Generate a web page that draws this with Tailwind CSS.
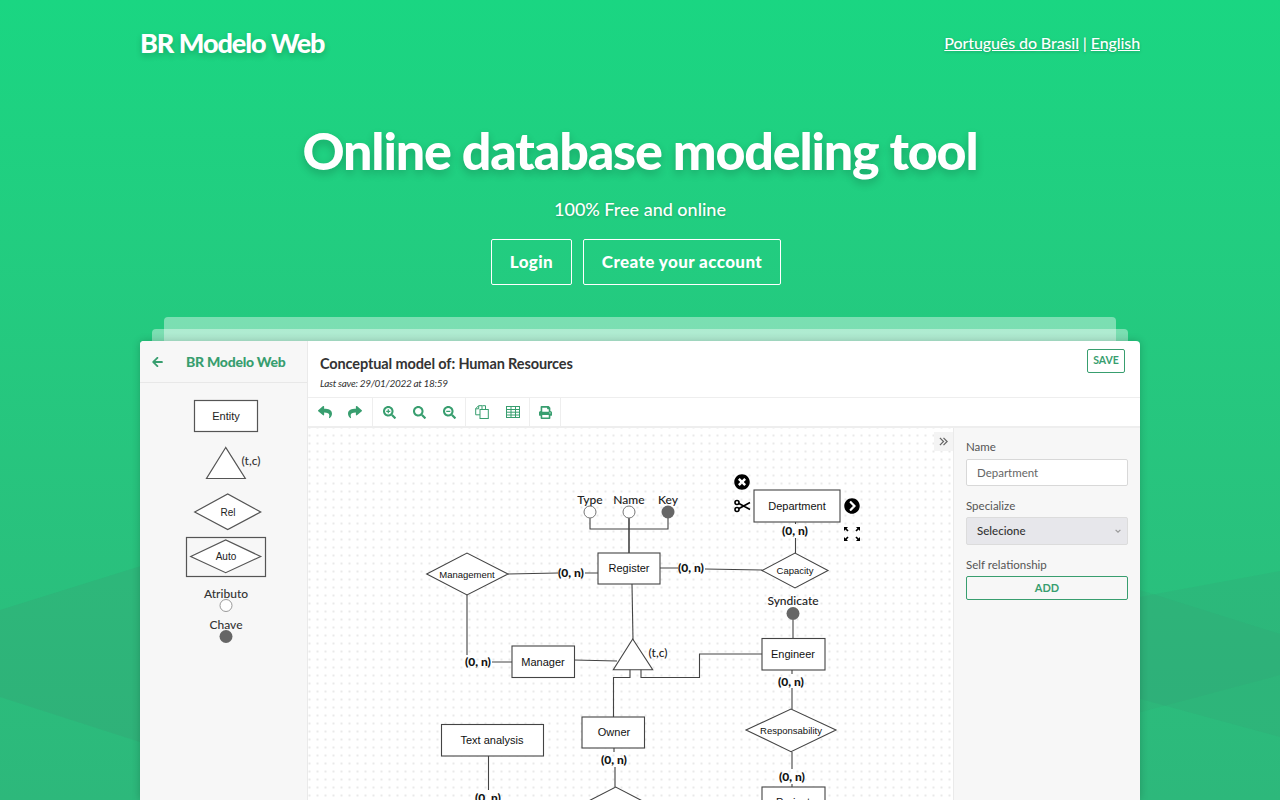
<!DOCTYPE html>
<html lang="en">

<head>
    <meta charset="UTF-8">
    <meta name="viewport" content="width=device-width, initial-scale=1.0">
    <title>BR Modelo Web</title>
    <script src="https://cdn.jsdelivr.net/npm/@tailwindcss/browser@4"></script>
</head>

<body class="font-['Lato',sans-serif] text-white">
    <div class="relative h-[800px] overflow-hidden bg-gradient-to-b from-[#1ad682] to-[#2db87b]">
        <!-- Background wedges -->
        <svg class="absolute inset-0" width="1280" height="800" viewBox="0 0 1280 800">
            <polygon points="0,610 320,510 700,560 320,800 0,697" fill="#47806a" fill-opacity="0.14" />
            <polygon points="1280,571 960,630 960,650 1280,737" fill="#47806a" fill-opacity="0.1" />
            <polygon points="1280,634 1140,590 960,560 960,760 1280,675" fill="#47806a" fill-opacity="0.09" />
        </svg>

        <div class="relative mx-auto w-[1000px]">
            <!-- Nav -->
            <nav class="flex h-[87px] items-center justify-between">
                <a href="#" class="text-[27px] font-black tracking-[-1.05px] [text-shadow:0_3px_6px_rgba(0,0,0,0.2)]">BR Modelo Web</a>
                <div class="pb-[2px] text-[16px] font-medium tracking-[-0.1px] [text-shadow:0_1px_3px_rgba(0,0,0,0.25)]">
                    <a href="#" class="underline">Português do Brasil</a> | <a href="#" class="underline">English</a>
                </div>
            </nav>

            <!-- Hero -->
            <header class="text-center">
                <h1 class="mt-[28px] text-[52px] leading-[70px] font-black tracking-[-1.2px] [text-shadow:0_4px_8px_rgba(0,0,0,0.2)]">Online database modeling tool</h1>
                <p class="mt-[10px] text-[18px] leading-[28px] font-medium [text-shadow:0_1px_3px_rgba(0,0,0,0.2)]">100% Free and online</p>
                <div class="mt-[16px] flex justify-center gap-[11px] pr-[8px]">
                    <a href="#" class="flex h-[46px] w-[81px] items-center justify-center rounded-[2px] border border-white text-[17px] font-black tracking-[0.4px]">Login</a>
                    <a href="#" class="flex h-[46px] w-[198px] items-center justify-center rounded-[2px] border border-white text-[17px] font-black tracking-[0.4px]">Create your account</a>
                </div>
            </header>

            <!-- Stacked sheets behind the app -->
            <div class="mx-6 mt-8 h-6 rounded-t-[4px] bg-white/40"></div>
            <div class="mx-3 -mt-3 h-3 rounded-t-[4px] bg-white/40"></div>

            <!-- App window -->
            <main class="flex h-[459px] overflow-hidden rounded-t-[4px] bg-white text-[#333] shadow-[0_0_8px_rgba(0,0,0,0.2)]">
                <!-- Palette -->
                <aside class="w-[168px] shrink-0 border-r border-[#eaeaea] bg-[#f7f7f7]">
                    <div class="flex h-[42px] items-center border-b border-[#e8e8e8] pl-[12px]">
                        <svg class="h-[12px] w-[11px] fill-[#389e6f]" viewBox="0 0 448 512"><path d="M257.5 445.1l-22.2 22.2c-9.4 9.4-24.6 9.4-33.9 0L7 273c-9.4-9.4-9.4-24.6 0-33.9L201.4 44.7c9.4-9.4 24.6-9.4 33.9 0l22.2 22.2c9.5 9.5 9.3 25-.4 34.3L136.6 216H424c13.3 0 24 10.7 24 24v32c0 13.3-10.7 24-24 24H136.6l120.5 114.8c9.8 9.3 10 24.8.4 34.3z" /></svg>
                        <span class="ml-[23px] text-[14px] font-black tracking-[-0.25px] text-[#389e6f]">BR Modelo Web</span>
                    </div>
                    <svg width="167" height="417" viewBox="140 383 167 417" class="font-['Liberation_Sans',sans-serif]">
                        <g fill="none" stroke="#555" stroke-width="1.2">
                            <rect x="194.5" y="400.5" width="63" height="31" fill="#fff" />
                            <polygon points="225.7,447.5 206.5,478.5 245.3,478.5" fill="#fff" />
                            <polygon points="194.7,512 227.7,494 260.7,512 227.7,529.5" fill="#fff" />
                            <rect x="186.5" y="537.5" width="79" height="39" />
                            <polygon points="190.7,556.5 225.7,540 260.7,556.5 225.7,572.7" fill="#fff" />
                        </g>
                        <circle cx="226" cy="605.5" r="6" fill="#fff" stroke="#999" />
                        <circle cx="226" cy="636.5" r="6.5" fill="#666" />
                        <g fill="#222" text-anchor="middle" font-size="11">
                            <text x="226" y="420">Entity</text>
                            <text x="228" y="515.5" font-size="10">Rel</text>
                            <text x="226" y="560" font-size="10">Auto</text>
                        </g>
                        <g fill="#333" text-anchor="middle" font-size="12" font-weight="500" class="font-['Lato',sans-serif]">
                            <text x="251" y="465">(t,c)</text>
                            <text x="226" y="597.5">Atributo</text>
                            <text x="226" y="628.5">Chave</text>
                        </g>
                    </svg>
                </aside>

                <section class="flex min-w-0 flex-1 flex-col">
                    <!-- Title bar -->
                    <div class="flex h-[57px] shrink-0 justify-between border-b border-[#eeeeee] pr-[15px] pl-[12px]">
                        <div>
                            <h2 class="mt-[13px] text-[14.5px] leading-[20px] font-bold tracking-[-0.12px]">Conceptual model of: Human Resources</h2>
                            <p class="mt-[2px] text-[10px] leading-[14px] tracking-[-0.3px] italic">Last save: 29/01/2022 at 18:59</p>
                        </div>
                        <button class="mt-[8px] flex h-[24px] w-[38px] items-center justify-center rounded-[2px] border border-[#389e6f] text-[10.5px] font-bold text-[#389e6f]">SAVE</button>
                    </div>

                    <!-- Toolbar -->
                    <div class="flex h-[30px] shrink-0 items-stretch border-b-2 border-[#eeeeee] fill-[#389e6f]">
                        <div class="flex w-[65px] items-center justify-around border-r border-[#eeeeee] px-[2px]">
                            <svg class="h-[14px] w-[14px]" viewBox="0 0 512 512"><path d="M8.309 189.836L184.313 37.851C199.719 24.546 224 35.347 224 56.015v80.053c160.629 1.839 288 34.032 288 186.258 0 61.441-39.581 122.309-83.333 154.132-13.653 9.931-33.111-2.533-28.077-18.631 45.344-145.012-21.507-183.51-176.59-185.742V360c0 20.7-24.3 31.453-39.687 18.164l-176.004-152c-11.071-9.562-11.086-26.753 0-36.328z" /></svg>
                            <svg class="h-[14px] w-[14px]" viewBox="0 0 512 512"><path d="M503.691 189.836L327.687 37.851C312.281 24.546 288 35.347 288 56.015v80.053C127.371 137.907 0 170.1 0 322.326c0 61.441 39.581 122.309 83.333 154.132 13.653 9.931 33.111-2.533 28.077-18.631C66.066 312.814 132.917 274.316 288 272.085V360c0 20.7 24.3 31.453 39.687 18.164l176.004-152c11.071-9.562 11.086-26.753 0-36.328z" /></svg>
                        </div>
                        <div class="flex w-[93px] items-center justify-around border-r border-[#eeeeee] px-[1px]">
                            <svg class="h-[13px] w-[13px]" viewBox="0 0 512 512"><path d="M505 442.7L405.3 343c-4.5-4.5-10.6-7-17-7H372c27.6-35.3 44-79.7 44-128C416 93.1 322.9 0 208 0S0 93.1 0 208s93.1 208 208 208c48.3 0 92.7-16.4 128-44v16.3c0 6.4 2.5 12.5 7 17l99.7 99.7c9.4 9.4 24.6 9.4 33.9 0l28.3-28.3c9.4-9.4 9.4-24.6.1-34zM208 336c-70.7 0-128-57.2-128-128 0-70.7 57.2-128 128-128 70.7 0 128 57.2 128 128 0 70.7-57.2 128-128 128z" /><path d="M184 128h48v56h56v48h-56v56h-48v-56h-56v-48h56z" /></svg>
                            <svg class="h-[13px] w-[13px]" viewBox="0 0 512 512"><path d="M505 442.7L405.3 343c-4.5-4.5-10.6-7-17-7H372c27.6-35.3 44-79.7 44-128C416 93.1 322.9 0 208 0S0 93.1 0 208s93.1 208 208 208c48.3 0 92.7-16.4 128-44v16.3c0 6.4 2.5 12.5 7 17l99.7 99.7c9.4 9.4 24.6 9.4 33.9 0l28.3-28.3c9.4-9.4 9.4-24.6.1-34zM208 336c-70.7 0-128-57.2-128-128 0-70.7 57.2-128 128-128 70.7 0 128 57.2 128 128 0 70.7-57.2 128-128 128z" /></svg>
                            <svg class="h-[13px] w-[13px]" viewBox="0 0 512 512"><path d="M505 442.7L405.3 343c-4.5-4.5-10.6-7-17-7H372c27.6-35.3 44-79.7 44-128C416 93.1 322.9 0 208 0S0 93.1 0 208s93.1 208 208 208c48.3 0 92.7-16.4 128-44v16.3c0 6.4 2.5 12.5 7 17l99.7 99.7c9.4 9.4 24.6 9.4 33.9 0l28.3-28.3c9.4-9.4 9.4-24.6.1-34zM208 336c-70.7 0-128-57.2-128-128 0-70.7 57.2-128 128-128 70.7 0 128 57.2 128 128 0 70.7-57.2 128-128 128z" /><path d="M128 184h160v48H128z" /></svg>
                        </div>
                        <div class="flex w-[64px] items-center justify-around border-r border-[#eeeeee] px-[1px]">
                            <svg class="h-[14px] w-[14px]" viewBox="0 0 14 14" fill="none" stroke="#389e6f" stroke-width="1"><path d="M7 4.5V.7H3.6L.7 3.6v6.2H5" /><path d="M.7 3.8h3V.8" /><path d="M7.3 .7h3.2V4.5" /><rect x="5" y="4.5" width="8.3" height="9" fill="#fff" /></svg>
                            <svg class="h-[12px] w-[14px]" viewBox="0 0 14 12" fill="none" stroke="#389e6f" stroke-width="1"><rect x=".5" y=".5" width="13" height="11" /><path d="M.5 3.5h13M.5 6.2h13M.5 9h13M5 .5v11M9.5 .5v11" /></svg>
                        </div>
                        <div class="flex w-[31px] items-center justify-center border-r border-[#eeeeee]">
                            <svg class="h-[13px] w-[13px]" viewBox="0 0 512 512"><path d="M448 192V77.25c0-8.49-3.37-16.62-9.37-22.63L393.37 9.37c-6-6-14.14-9.37-22.63-9.37H96C78.33 0 64 14.33 64 32v160c-35.35 0-64 28.65-64 64v112c0 8.84 7.16 16 16 16h48v96c0 17.67 14.33 32 32 32h320c17.67 0 32-14.33 32-32v-96h48c8.84 0 16-7.16 16-16V256c0-35.35-28.65-64-64-64zm-64 256H128v-96h256v96zm0-224H128V64h192v48c0 8.84 7.16 16 16 16h48v96zm48 72c-13.25 0-24-10.75-24-24 0-13.26 10.75-24 24-24s24 10.74 24 24c0 13.25-10.75 24-24 24z" /></svg>
                        </div>
                    </div>

                    <div class="flex min-h-0 flex-1">
                        <!-- Canvas -->
                        <div class="relative w-[645px] shrink-0 bg-[radial-gradient(#d2d2d2_0.5px,transparent_0.9px)] bg-size-[8px_8px] bg-position-[-2.5px_3.5px]">
                            <svg width="645" height="372" viewBox="308 428 645 372" class="font-['Liberation_Sans',sans-serif]">
                                <!-- connectors -->
                                <g fill="none" stroke="#444" stroke-width="1.1">
                                    <path d="M590 518V529H668V518" />
                                    <path d="M629 518V553" stroke-width="1.6" />
                                    <path d="M632 584L633 640" />
                                    <path d="M508 574L558 573M585 573H598" />
                                    <path d="M660 568H678M705 569L762 570" />
                                    <path d="M795.5 522V524M795.5 538V553" />
                                    <path d="M793 620V639" />
                                    <path d="M467 595V655M492 662H512" />
                                    <path d="M574 660L617 661" />
                                    <path d="M762 654H699.5V677.5H641V669" />
                                    <path d="M613.5 717V677.5H630V669" />
                                    <path d="M614 748V752M615 767V787" />
                                    <path d="M792 670V674M792 688V709M792 752V769M792 784V787" />
                                    <path d="M488.5 756V790" />
                                </g>
                                <!-- shapes -->
                                <g fill="#fff" stroke="#444" stroke-width="1.1">
                                    <rect x="754" y="490" width="86" height="32" />
                                    <rect x="598" y="553" width="62" height="31" />
                                    <rect x="512" y="646" width="62.5" height="31.5" />
                                    <rect x="762" y="638.5" width="63" height="31.5" />
                                    <rect x="582" y="717" width="62.5" height="31" />
                                    <rect x="441.5" y="724.5" width="102" height="31.5" />
                                    <rect x="762" y="787" width="63" height="31" />
                                    <polygon points="426.7,574 467,553 508,574 467,595" />
                                    <polygon points="762,570.5 795,553 828,570.5 795,588" />
                                    <polygon points="746,730 791,709 836,730 791,751.7" />
                                    <polygon points="575,808 615.7,787 656,808 615.7,829" />
                                    <polygon points="632.7,639 613.3,669.7 652.7,669.7" />
                                </g>
                                <circle cx="590" cy="512" r="6" fill="#fff" stroke="#777" />
                                <circle cx="629" cy="512" r="6" fill="#fff" stroke="#777" />
                                <circle cx="668" cy="512" r="6.5" fill="#666" />
                                <circle cx="793" cy="613.5" r="6.5" fill="#666" />
                                <!-- labels -->
                                <g fill="#111" text-anchor="middle" font-size="11">
                                    <text x="797" y="510">Department</text>
                                    <text x="629" y="572">Register</text>
                                    <text x="543" y="666">Manager</text>
                                    <text x="793" y="658">Engineer</text>
                                    <text x="614" y="736">Owner</text>
                                    <text x="492" y="744">Text analysis</text>
                                    <text x="793" y="806">Project</text>
                                    <text x="467" y="578" font-size="9.5">Management</text>
                                    <text x="795" y="574" font-size="9.5">Capacity</text>
                                    <text x="791" y="734" font-size="9.5">Responsability</text>
                                </g>
                                <g fill="#222" text-anchor="middle" font-size="12" font-weight="500" class="font-['Lato',sans-serif]">
                                    <text x="590" y="504">Type</text>
                                    <text x="629" y="504">Name</text>
                                    <text x="668" y="504">Key</text>
                                    <text x="793" y="605">Syndicate</text>
                                    <text x="658" y="656.5">(t,c)</text>
                                </g>
                                <g fill="#111" text-anchor="middle" font-size="12" font-weight="900" class="font-['Lato',sans-serif]">
                                    <text x="571" y="577">(0, n)</text>
                                    <text x="691" y="572">(0, n)</text>
                                    <text x="795" y="535">(0, n)</text>
                                    <text x="478" y="666">(0, n)</text>
                                    <text x="791" y="685.5">(0, n)</text>
                                    <text x="614" y="764">(0, n)</text>
                                    <text x="792" y="781">(0, n)</text>
                                    <text x="488" y="802">(0, n)</text>
                                </g>
                                <!-- selection handles -->
                                <svg x="734" y="474" width="16" height="16" viewBox="0 0 512 512"><path d="M256 8C119 8 8 119 8 256s111 248 248 248 248-111 248-248S393 8 256 8zm121.6 313.1c4.7 4.7 4.7 12.3 0 17L338 377.6c-4.7 4.7-12.3 4.7-17 0L256 312l-65.1 65.6c-4.7 4.7-12.3 4.7-17 0L134.4 338c-4.7-4.7-4.7-12.3 0-17l65.6-65-65.6-65.1c-4.7-4.7-4.7-12.3 0-17l39.6-39.6c4.7-4.7 12.3-4.7 17 0l65 65.7 65.1-65.6c4.7-4.7 12.3-4.7 17 0l39.6 39.6c4.7 4.7 4.7 12.3 0 17L312 256l65.6 65.1z" /></svg>
                                <svg x="844" y="498" width="16" height="16" viewBox="0 0 512 512"><path d="M256 8c137 0 248 111 248 248S393 504 256 504 8 393 8 256 119 8 256 8zm113.9 231L234.4 103.5c-9.4-9.4-24.6-9.4-33.9 0l-17 17c-9.4 9.4-9.4 24.6 0 33.9L285.1 256 183.5 357.6c-9.4 9.4-9.4 24.6 0 33.9l17 17c9.4 9.4 24.6 9.4 33.9 0L369.9 273c9.4-9.4 9.4-24.6 0-34z" /></svg>
                                <g fill="none" stroke="#000">
                                    <circle cx="737" cy="502.5" r="2" stroke-width="1.6" />
                                    <circle cx="737" cy="509.5" r="2" stroke-width="1.6" />
                                    <path d="M739 503.5L750 509.5M739 508.5L750 502.5" stroke-width="1.6" />
                                </g>
                                <g fill="#000">
                                    <path d="M844 527h4l-1.4 1.4 2 2-1.2 1.2-2-2L844 531z" />
                                    <path d="M860 527h-4l1.4 1.4-2 2 1.2 1.2 2-2L860 531z" />
                                    <path d="M844 541h4l-1.4-1.4 2-2-1.2-1.2-2 2L844 537z" />
                                    <path d="M860 541h-4l1.4-1.4-2-2 1.2-1.2 2 2L860 537z" />
                                </g>
                            </svg>
                            <button class="absolute top-[4px] right-0 flex h-[19px] w-[19px] items-center justify-center bg-[#f4f4f4]">
                                <svg class="h-[9px] w-[9px]" viewBox="0 0 10 10" fill="none" stroke="#666" stroke-width="1.4"><path d="M1 1l4 4-4 4M5 1l4 4-4 4" /></svg>
                            </button>
                        </div>

                        <!-- Properties -->
                        <div class="flex-1 border-l border-[#eaeaea] bg-[#f7f7f7] pt-[11px] pr-[12px] pl-[12px] text-[11.5px] text-[#555]">
                            <label class="block leading-[16px]">Name</label>
                            <input value="Department" class="mt-[4px] block h-[27px] w-full rounded-[2px] border border-[#d8d8d8] bg-white px-[10px] text-[11.5px] text-[#666]">
                            <label class="mt-[12px] block leading-[16px]">Specialize</label>
                            <div class="mt-[3px] flex h-[28px] items-center justify-between rounded-[2px] border border-[#dcdcdc] bg-[#e7e7eb] pr-[6px] pl-[10px] font-medium text-[#333]">
                                <span>Selecione</span>
                                <svg class="h-[6px] w-[6px]" viewBox="0 0 10 10" fill="none" stroke="#999" stroke-width="2"><path d="M1 3l4 4 4-4" /></svg>
                            </div>
                            <label class="mt-[12px] block leading-[16px]">Self relationship</label>
                            <button class="mt-[3px] block h-[24px] w-full rounded-[2px] border border-[#389e6f] text-[11px] font-bold text-[#389e6f]">ADD</button>
                        </div>
                    </div>
                </section>
            </main>
        </div>
    </div>
</body>

</html>
